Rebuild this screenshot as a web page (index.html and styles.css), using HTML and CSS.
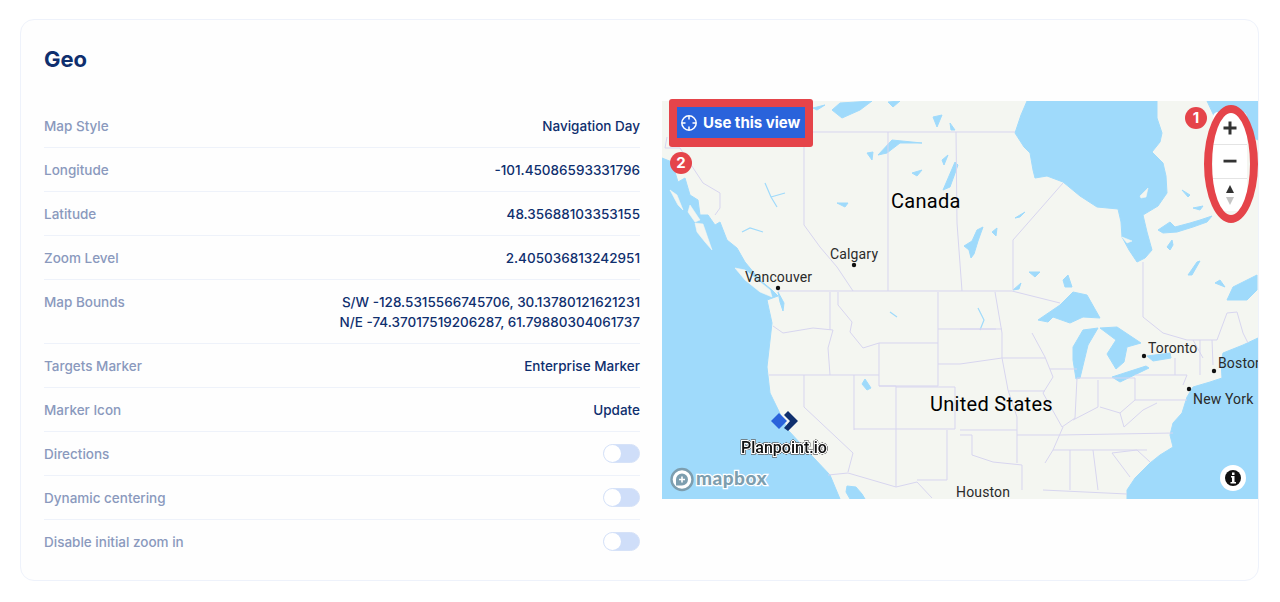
FILE: index.html
```html
<!DOCTYPE html>
<html lang="en">
<head>
<meta charset="utf-8">
<title>Geo</title>
<link rel="stylesheet" href="styles.css">
</head>
<body>
<section class="card">
  <h2 class="title">Geo</h2>
  <div class="content">
    <div class="list">
      <div class="row"><span class="label">Map Style</span><span class="value">Navigation Day</span></div>
      <div class="row"><span class="label">Longitude</span><span class="value">-101.45086593331796</span></div>
      <div class="row"><span class="label">Latitude</span><span class="value">48.35688103353155</span></div>
      <div class="row"><span class="label">Zoom Level</span><span class="value">2.405036813242951</span></div>
      <div class="row"><span class="label">Map Bounds</span><span class="value">S/W -128.5315566745706, 30.13780121621231<br>N/E -74.37017519206287, 61.79880304061737</span></div>
      <div class="row"><span class="label">Targets Marker</span><span class="value">Enterprise Marker</span></div>
      <div class="row"><span class="label">Marker Icon</span><span class="value">Update</span></div>
      <div class="row"><span class="label">Directions</span><span class="toggle"><span class="knob"></span></span></div>
      <div class="row"><span class="label">Dynamic centering</span><span class="toggle"><span class="knob"></span></span></div>
      <div class="row last"><span class="label">Disable initial zoom in</span><span class="toggle"><span class="knob"></span></span></div>
    </div>
    <div class="map">
      <svg class="map-svg" viewBox="662 101 596 398" width="596" height="398">
        <rect class="land" x="662" y="101" width="596" height="398"/>
        <g class="water">
          <path d="M662 158L672 162 678 182 685 178 690 195 698 200 700 215 708 215 715 225 720 222 727 240 737 248 745 262 760 280 772 290 778 296 767 300 772 323 767 367 770 393 788 430 813 457 830 475 840 499H662Z"/>
          <path d="M847 486L856 487 862 494 865 499H850L846 492Z"/>
          <path d="M1258 338L1243 345 1223 353 1221 362 1222 378 1210 382 1193 387 1187 397 1182 413 1173 423 1170 435 1173 447 1160 455 1150 463 1135 478 1127 490 1127 499H1258Z"/>
          <path d="M1027 101L1021 115 1015 133 1024 147 1030 153 1033 170 1035 178 1047 176 1063 182 1080 196 1097 207 1118 209 1121 222 1122 237 1129 250 1137 262 1145 258 1152 250 1147 232 1143 215 1158 206 1167 193 1166 176 1163 163 1152 152 1160 142 1162 133 1157 118 1157 101Z"/>
          <path d="M1207 101L1215 118 1230 128 1248 135 1258 140V101Z"/>
          <path d="M1227 300L1233 287 1257 275V290L1247 300Z"/>
          <path d="M1182 190L1190 195 1188 197ZM1193 208L1203 206 1200 210ZM1158 230L1170 222 1175 227 1190 223 1200 220 1212 216 1207 222 1193 227 1177 232 1163 233ZM1167 247L1172 240 1173 245 1170 250ZM1188 275L1197 262 1200 261 1192 275ZM1215 283L1220 280 1225 287Z"/>
          <path d="M1015 218L1025 212 1020 217ZM1029 272L1040 272 1035 277ZM1063 280L1068 275 1072 287 1065 287ZM1013 290L1021 283 1019 289ZM964 246L972 241 977 230 983 227 978 241 974 254 971 258 969 250ZM992 232L997 228 996 236Z"/>
          <path d="M832 110L840 103 872 101 860 110 842 118ZM888 102L900 101 893 107ZM813 108L825 105 817 110ZM878 155L892 140 922 143 900 143 887 153ZM867 153L873 152 872 160ZM933 117L942 115 937 127ZM950 123L955 130 951 130ZM942 160L948 155 944 165ZM912 173L922 170 917 176ZM943 190L955 162 958 165 950 187ZM837 203L848 203 845 207Z"/>
          <path d="M1038 320L1060 305 1073 292 1087 295 1100 318 1083 317 1070 323 1053 317 1048 322ZM1073 347L1083 330 1098 328 1088 345 1080 378 1076 379 1073 360ZM1100 328L1117 327 1141 343 1127 347 1124 362 1116 369 1107 354 1116 340Z"/>
          <path d="M1112 377L1146 366 1149 368 1120 382ZM1147 356L1170 353 1171 358 1153 361Z"/>
          <path d="M865 379L871 388 867 390 862 384ZM778 292L784 303 783 311 780 302Z"/>
        </g>
        <g class="river">
          <path d="M765 183L771 197 777 207M771 197L785 193M742 232L750 228 763 232M978 308L984 320 980 330M890 312L897 317"/>
        </g>
        <g class="island">
          <path d="M695 223L703 224 712 250 705 242 697 232ZM735 268L745 270 770 290 772 297 760 292 745 280ZM670 190L677 195 683 210 678 205ZM690 205L700 220 695 222 688 212ZM1122 237L1132 241 1127 243ZM1140 196L1148 188 1146 197 1141 198Z"/>
        </g>
        <g class="border">
          <path d="M778 291H1012L1024 294 1040 298 1060 303"/>
          <path d="M807 132H1015M804 133V225L820 247 837 267 853 291M888 132V291M956 132L957 223 962 291"/>
          <path d="M667 137L665 148 680 148 703 183 720 193 720 208 715 215M1063 183L1013 240V290M1143 262V317L1163 333 1187 340H1217L1227 313 1237 312 1243 333 1248 343M1200 340V375M1212 340L1213 365"/>
          <path d="M773 326L783 333 813 328 833 330 828 348 830 375M830 292V330M838 292V305L852 322 850 332 863 348 879 343H938M769 375H879M879 343V386H938V292M938 329H996M938 364H960L1002 358H1045M804 375V407L853 453 848 472M854 375V430M879 386H896V487M854 429H955M896 387H955V429M848 473L896 487 917 482 932 498M947 430V480H917M828 475L848 473"/>
          <path d="M995 292L1002 333V358L1008 390 1017 417V463M960 329H1002M1032 333L1045 357 1053 377 1043 393 1062 427M1050 369H1077M1008 391H1045M960 430H1017M960 435H972V455L993 462 1022 465V490M1017 435H1060L1173 433M1077 378L1075 418 1062 427M1077 378H1135M1098 380V407L1073 420M1135 378V400L1120 413 1100 407M1135 400H1187M1135 375H1187L1183 385M1120 413L1124 427 1143 410 1157 403M1053 450H1147M1045 463L1053 450 1063 427M1070 450V490M1093 450L1098 490M1112 453L1130 477M1112 453L1137 450 1150 462M1043 490L1127 494M1175 358V375M1193 340L1203 358"/>
        </g>
        <g class="places">
          <circle cx="854" cy="265" r="2.2"/><circle cx="778" cy="288" r="2.2"/><circle cx="1144" cy="356" r="2.2"/><circle cx="1214" cy="371" r="2.2"/><circle cx="1189" cy="389" r="2.2"/>
          <text class="big" x="891" y="208">Canada</text>
          <text class="big" x="930" y="411">United States</text>
          <text class="small" x="830" y="259">Calgary</text>
          <text class="small" x="745" y="282">Vancouver</text>
          <text class="small" x="1148" y="353">Toronto</text>
          <text class="small" x="1218" y="368">Boston</text>
          <text class="small" x="1193" y="404">New York</text>
          <text class="small" x="956" y="497">Houston</text>
        </g>
        <path class="mark-blue" d="M771 421L779 413 787 421 779 429Z"/>
        <path class="mark-navy" d="M784 415L788 411 798 421 788 431 784 428 790 421Z"/>
        <text class="mark-label" x="741" y="453">Planpoint.io</text>
        <g class="mapbox">
          <circle class="mb-ring" cx="682" cy="479.5" r="10.5"/>
          <path class="mb-dot" d="M676 485.5V479.5A6 6 0 1 1 682 485.5Z"/>
          <path class="mb-plus" d="M681.2 476.5h1.6v2.2h2.2v1.6h-2.2v2.2h-1.6v-2.2h-2.2v-1.6h2.2z"/>
          <text class="mb-text" x="696" y="485">mapbox</text>
        </g>
        <circle class="info-halo" cx="1233" cy="478" r="13"/>
        <circle class="info-dot" cx="1233" cy="478" r="8"/>
        <path class="info-i" d="M1231 476H1234.5V482H1236V483.5H1230.5V482H1232V477.5H1231ZM1232 472.5H1234.5V475H1232Z"/>
      </svg>

      <div class="controls">
        <div class="ctrl"><svg viewBox="0 0 16 16" width="16" height="16"><path class="ctrl-ic" d="M6.5 1.5h3v5h5v3h-5v5h-3v-5h-5v-3h5z"/></svg></div>
        <div class="ctrl"><svg viewBox="0 0 16 16" width="16" height="16"><path class="ctrl-ic" d="M1.5 6.7h13v2.8h-13z"/></svg></div>
        <div class="ctrl"><svg viewBox="0 0 8 20" width="8" height="20"><path class="ctrl-ic" d="M4 0l4 8H0z"/><path class="ctrl-gr" d="M4 20l-4-8h8z"/></svg></div>
      </div>
      <div class="ring"></div>
      <span class="badge badge-one">1</span>

      <div class="callout">
        <button class="use-btn" type="button">
          <svg viewBox="0 0 18 18" width="18" height="18"><circle class="target" cx="9" cy="9" r="7.2"/><path class="target" d="M9 2v3.5M9 12.5V16M2 9h3.5M12.5 9H16"/></svg>
          Use this view
        </button>
      </div>
      <span class="badge badge-two">2</span>
    </div>
  </div>
</section>
</body>
</html>
```

FILE: styles.css
```css
* { box-sizing: border-box; }
html, body { margin: 0; padding: 0; background: #fff; }
body { font-family: "Inter", "Liberation Sans", sans-serif; height: 602px; overflow: hidden; padding: 19px 21px 0 20px; }
.card { height: 562px; border: 1px solid #eef2fb; border-radius: 14px; background: #fefefe; padding: 0 0 0 23px; }
.title { margin: 0; padding-top: 24px; height: 81px; font-size: 22px; line-height: 30px; font-weight: 700; color: #0f2f6e; }
.content { display: grid; grid-template-columns: 596px 596px; column-gap: 22px; align-items: start; }
.list { padding-top: 3px; }
.row { display: flex; justify-content: space-between; align-items: flex-start; padding: 12px 0 11px; border-bottom: 1px solid #eef2fa; font-size: 13.5px; line-height: 20px; font-weight: 500; }
.row.last { border-bottom: 0; }
.label { color: #8a99bd; }
.value { color: #0f2f6e; text-align: right; }
.toggle { display: flex; align-items: center; width: 37px; height: 19px; border-radius: 10px; background: #cfdef9; border: 1px solid #d6e2f8; }
.knob { width: 17px; height: 17px; border-radius: 50%; background: #fff; }
.map { position: relative; width: 596px; height: 398px; }
.map-svg { display: block; }
.land { fill: #f4f6f1; }
.water path { fill: #9fdafb; stroke: #9fdafb; stroke-width: 1; stroke-linejoin: round; }
.river path { fill: none; stroke: #9fdafb; stroke-width: 1.2; }
.island path { fill: #f4f6f1; stroke: #f4f6f1; stroke-width: 0.6; stroke-linejoin: round; }
.water, .island { filter: blur(0.4px); }
.border { filter: blur(0.2px); }
.border path { fill: none; stroke: #d7d5ef; stroke-width: 1; stroke-linejoin: round; }
.places circle { fill: #111; }
.places text { font-family: "Roboto", "Liberation Sans", sans-serif; fill: #2a2a2a; }
.places .big { font-size: 20px; font-weight: 400; letter-spacing: 0.3px; fill: #000; }
.places .small { font-size: 14px; letter-spacing: 0.15px; }
.mark-blue { fill: #2a63db; }
.mark-navy { fill: #0f2f6e; }
.mark-label { font-family: "Roboto", "Liberation Sans", sans-serif; font-size: 16px; font-weight: 500; fill: #111; stroke: #fff; stroke-width: 2.5px; paint-order: stroke; filter: drop-shadow(0 0 0.7px #000) drop-shadow(0 0 0.3px #000); }
.mb-ring { fill: #fff; stroke: #7d9eaf; stroke-width: 2.4; }
.mb-dot { fill: #7d9eaf; }
.mb-plus { fill: #fff; }
.mb-text { font-family: "Lato", "Liberation Sans", sans-serif; font-size: 19px; font-weight: 900; fill: #7d9eaf; stroke: #fff; stroke-width: 2.6px; paint-order: stroke; letter-spacing: 0.5px; }
.info-halo { fill: #fff; }
.info-dot { fill: #111; }
.info-i { fill: #fff; }
.controls { position: absolute; left: 551px; top: 11px; width: 34px; height: 99px; border-radius: 5px; background: #fff; display: flex; flex-direction: column; }
.ctrl { flex: 1; display: flex; align-items: center; justify-content: center; border-bottom: 1px solid #e4e4e4; }
.ctrl:last-child { border-bottom: 0; }
.ctrl-ic { fill: #333; }
.ctrl-gr { fill: #c4c4c4; }
.ring { position: absolute; left: 541.5px; top: 4px; width: 54px; height: 118px; border: 8px solid #e5444a; border-radius: 50%; }
.badge { position: absolute; width: 22px; height: 22px; border-radius: 50%; background: #e5444a; color: #fff; font-size: 15px; font-weight: 700; line-height: 22px; text-align: center; }
.badge-one { left: 523px; top: 6px; }
.badge-two { left: 8px; top: 51px; }
.callout { position: absolute; left: 7px; top: -2px; width: 144px; height: 48px; padding: 8px 8px 9px 8px; background: #e5444a; border-radius: 3px; }
.use-btn { display: flex; align-items: center; gap: 5px; width: 100%; height: 31px; padding: 0 3px; margin: 0; border: 0; background: #2a63db; color: #fff; font-family: "Inter", "Liberation Sans", sans-serif; font-size: 15px; font-weight: 700; white-space: nowrap; }
.use-btn svg { flex: none; }
.target { fill: none; stroke: #fff; stroke-width: 1.5; }
```
